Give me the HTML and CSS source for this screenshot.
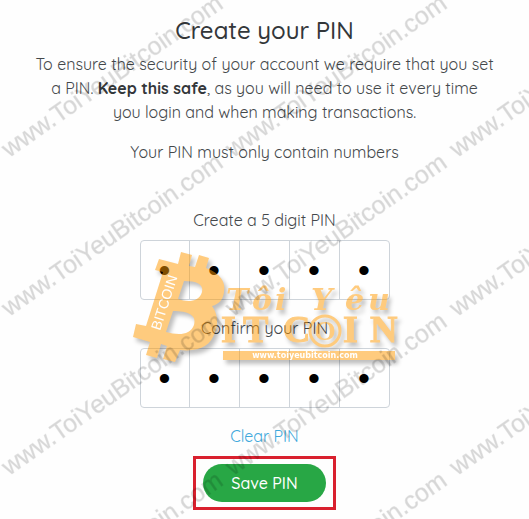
FILE: index.html
```html
<!DOCTYPE html>
<html lang="en">
<head>
    <meta charset="UTF-8">
    <meta name="viewport" content="width=device-width, initial-scale=1.0">
    <title>Create your PIN</title>
    <link rel="stylesheet" href="styles.css">
</head>
<body>

    <main class="page">
        <h1>Create your PIN</h1>
        <p>To ensure the security of your account we require that you set a PIN. <strong>Keep this safe</strong>, as you will need to use it every time you&nbsp;login and when making transactions.</p>
        <p>Your PIN must only contain numbers</p>

        <form class="pin-form">
            <label for="pin-1">Create a 5 digit PIN</label>
            <div class="pin">
                <input type="password" id="pin-1" maxlength="1" value="1">
                <input type="password" aria-label="Digit 2" maxlength="1" value="2">
                <input type="password" aria-label="Digit 3" maxlength="1" value="3">
                <input type="password" aria-label="Digit 4" maxlength="1" value="4">
                <input type="password" aria-label="Digit 5" maxlength="1" value="5">
            </div>

            <label for="confirm-1">Confirm your PIN</label>
            <div class="pin">
                <input type="password" id="confirm-1" maxlength="1" value="1">
                <input type="password" aria-label="Confirm digit 2" maxlength="1" value="2">
                <input type="password" aria-label="Confirm digit 3" maxlength="1" value="3">
                <input type="password" aria-label="Confirm digit 4" maxlength="1" value="4">
                <input type="password" aria-label="Confirm digit 5" maxlength="1" value="5">
            </div>

            <a class="clear" href="#">Clear PIN</a>
            <div class="highlight">
                <button type="button" class="save">Save PIN</button>
            </div>

            <!-- site logo over the form -->
            <svg class="logo" viewBox="128 246 280 122" width="280" height="122">
                <g class="logo-shape">
                    <path fill-rule="evenodd" d="M159 259L178 264L181 252L192 255L189 266L195 267L199 255L209 258L206 268C220 273 226 282 224 292C223 300 219 304 212 306C217 313 219 322 215 332C211 346 199 352 180 350L175 362L163 359L167 346L161 344L157 358L146 355L150 342L133 337L136 324L146 326L163 272L155 270ZM184 281L178 299C186 302 199 303 202 292C204 284 196 281 184 281ZM173 311L166 332C177 335 190 336 194 325C197 315 188 311 173 311Z"/>
                    <text class="logo-top" x="226 252 275" y="310">Tôi</text>
                    <text class="logo-top" x="311 345 368" y="310">Yêu</text>
                    <text class="logo-main" x="221 243 283 343 370" y="342">ITCIN</text>
                    <circle class="ring" cx="325" cy="331" r="15"/>
                    <text class="logo-coin" x="325" y="340">O</text>
                    <rect x="223" y="351" width="172" height="9"/>
                    <text class="logo-side" transform="translate(160 331) rotate(-72)">BITCOIN</text>
                    <text class="logo-url" x="305" y="358">www.toiyeubitcoin.com</text>
                </g>
            </svg>
        </form>
    </main>

    <!-- repeated watermark -->
    <svg class="watermark" aria-hidden="true">
        <text transform="translate(9 158) rotate(-35)">www.ToiYeuBitcoin.com</text>
        <text transform="translate(233 158) rotate(-35)">www.ToiYeuBitcoin.com</text>
        <text transform="translate(457 158) rotate(-35)">www.ToiYeuBitcoin.com</text>
        <text transform="translate(9 317) rotate(-35)">www.ToiYeuBitcoin.com</text>
        <text transform="translate(233 317) rotate(-35)">www.ToiYeuBitcoin.com</text>
        <text transform="translate(457 317) rotate(-35)">www.ToiYeuBitcoin.com</text>
        <text transform="translate(9 476) rotate(-35)">www.ToiYeuBitcoin.com</text>
        <text transform="translate(233 476) rotate(-35)">www.ToiYeuBitcoin.com</text>
        <text transform="translate(457 476) rotate(-35)">www.ToiYeuBitcoin.com</text>
        <text transform="translate(9 635) rotate(-35)">www.ToiYeuBitcoin.com</text>
        <text transform="translate(233 635) rotate(-35)">www.ToiYeuBitcoin.com</text>
    </svg>

</body>
</html>
```
FILE: styles.css
```css
* {
    box-sizing: border-box;
}
body {
    margin: 0;
    position: relative;
    background: #fefefe;
    color: #44484b;
    font-family: Quicksand, "Open Sans", sans-serif;
    font-size: 16px;
    font-weight: 400;
    line-height: 24px;
    text-align: center;
}
.page {
    max-width: 486px;
    margin: 0 auto;
    padding: 16px 10px 9px;
}
h1 {
    margin: 0 0 8px;
    color: #33373a;
    font-size: 24px;
    font-weight: 500;
    line-height: 28px;
}
p {
    margin: 0 0 16px;
}
strong {
    color: #33373a;
    font-weight: 700;
}
.pin-form {
    position: relative;
    display: flex;
    flex-direction: column;
    align-items: center;
    margin-top: 44px;
}
.pin {
    display: flex;
    margin: 8px 0 16px;
    border: 1px solid #ced4da;
    border-radius: 4px;
    background: #fff;
    overflow: hidden;
}
.pin input {
    width: 50px;
    height: 58px;
    padding: 0;
    border: 0;
    border-right: 1px solid #ced4da;
    background: none;
    color: #000;
    font-family: "Liberation Sans", sans-serif;
    font-size: 34px;
    text-align: center;
}
.pin input:first-child {
    width: 49px;
}
.pin input:last-child {
    width: 49px;
    border-right: 0;
}
.clear {
    color: #3fa9dc;
    text-decoration: none;
}
.highlight {
    margin-top: 8px;
    padding: 5px 7px;
    border: 3px solid #d9202e;
}
.save {
    display: block;
    height: 38px;
    padding: 0 28px;
    border: 0;
    border-radius: 19px;
    background: #28a745;
    color: #fff;
    font: inherit;
    font-weight: 500;
    cursor: pointer;
}
.logo {
    position: absolute;
    top: 38px;
    left: 50%;
    margin-left: -137px;
    pointer-events: none;
}
.logo-shape {
    fill: #ff9900;
    opacity: 0.5;
    filter: drop-shadow(3px 4px 2px rgba(0, 0, 0, 0.5));
}
.logo-top {
    font: italic bold 30px "DejaVu Serif", serif;
}
.logo-main {
    font: bold 38px "Liberation Serif", serif;
    stroke: #ff9900;
}
.ring {
    fill: none;
    stroke: #ff9900;
    stroke-width: 3px;
}
.logo-coin {
    font: bold 28px "Liberation Serif", serif;
    text-anchor: middle;
}
.logo-side {
    fill: #fff;
    font: 14px "Liberation Sans", sans-serif;
}
.logo-url {
    fill: #fff;
    font: bold 8px "DejaVu Sans", sans-serif;
    text-anchor: middle;
}
.watermark {
    position: absolute;
    top: 0;
    left: 0;
    width: 100%;
    height: 100%;
    overflow: hidden;
    pointer-events: none;
}
.watermark text {
    fill: #000;
    stroke: #000;
    stroke-opacity: 0.4;
    opacity: 0.15;
    font: 25px "Liberation Sans", sans-serif;
}
```
